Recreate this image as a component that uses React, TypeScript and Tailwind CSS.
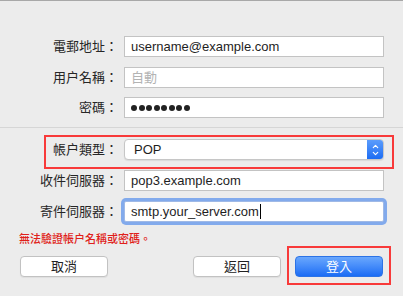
import { ChevronDown, ChevronUp } from "lucide-react";

const font = { fontFamily: '"Liberation Sans", "Noto Sans CJK TC", sans-serif' };

function Row({ label, children, className = "" }: { label: string; children: React.ReactNode; className?: string }) {
  return (
    <div className={`flex items-center h-[21px] ${className}`}>
      <div className="w-[118px] text-right text-[13px] text-[#262626] leading-none">{label}</div>
      <div className="ml-[6px] w-[260px] h-[21px]">{children}</div>
    </div>
  );
}

function TextField({ value, placeholder }: { value?: string; placeholder?: string }) {
  return (
    <div className="h-full bg-white border border-[#c3c3c3] flex items-center px-[6px] text-[13px] leading-none">
      {value ? <span className="text-[#1e1e1e]">{value}</span> : <span className="text-[#b3b3b3]">{placeholder}</span>}
    </div>
  );
}

export default function App() {
  return (
    <div style={font} className="relative w-[403px] h-[296px] bg-[#ececec] border-t border-[#a8a8a8] overflow-hidden">
      <div className="flex flex-col">
        <Row label="電郵地址：" className="mt-[35px]">
          <TextField value="username@example.com" />
        </Row>
        <Row label="用户名稱：" className="mt-[10px]">
          <TextField placeholder="自動" />
        </Row>
        <Row label="密碼：" className="mt-[9px]">
          <div className="h-full bg-white border border-[#c3c3c3] flex items-center gap-[1.5px] px-[6px]">
            {Array.from({ length: 8 }).map((_, i) => (
              <span key={i} className="w-[6px] h-[6px] rounded-full bg-[#222]" />
            ))}
          </div>
        </Row>

        <div className="mt-[9px] h-px bg-[#d6d6d6]" />

        <Row label="帳户類型：" className="mt-[11px]">
          <div className="h-full flex bg-white border border-[#c6c6c6] rounded-[4px] overflow-hidden shadow-[0_1px_1px_rgba(0,0,0,0.08)]">
            <div className="flex-1 flex items-center pl-[9px] text-[13px] text-[#1e1e1e] leading-none">POP</div>
            <div className="w-[16px] h-full bg-gradient-to-b from-[#5b9cfc] to-[#1a6cf3] flex flex-col items-center justify-center text-white">
              <ChevronUp size={9} strokeWidth={3} className="-mb-[1px]" />
              <ChevronDown size={9} strokeWidth={3} className="-mt-[1px]" />
            </div>
          </div>
        </Row>
        <Row label="收件伺服器：" className="mt-[10px]">
          <TextField value="pop3.example.com" />
        </Row>
        <Row label="寄件伺服器：" className="mt-[10px]">
          <div className="h-full bg-white border border-[#9fb9e6] ring-[3px] ring-[#82aaec] rounded-[2px] flex items-center px-[6px] text-[13px] leading-none text-[#1e1e1e]">
            smtp.your_server.com
            <span className="ml-px w-px h-[15px] bg-black" />
          </div>
        </Row>

        <div className="mt-[10px] ml-[19px] text-[11px] leading-[14px] font-medium text-[#e01f1b]">無法驗證帳户名稱或密碼。</div>

        <div className="mt-[10px] flex h-[21px] px-[20px]">
          <button className="w-[88px] h-full bg-white border border-[#c2c2c2] rounded-[4px] text-[13px] text-[#222] leading-none shadow-[0_1px_1px_rgba(0,0,0,0.06)]">取消</button>
          <div className="flex-1" />
          <button className="w-[88px] h-full bg-white border border-[#c2c2c2] rounded-[4px] text-[13px] text-[#222] leading-none shadow-[0_1px_1px_rgba(0,0,0,0.06)]">返回</button>
          <button className="ml-[14px] w-[88px] h-full rounded-[4px] bg-gradient-to-b from-[#69a7fd] to-[#1a6cf5] border border-[#2c73e6] text-[13px] text-white leading-none">登入</button>
        </div>
      </div>

      {/* annotation boxes */}
      <div className="absolute left-[44px] top-[134px] w-[350px] h-[34px] border-[2.5px] border-[#f83a3a]" />
      <div className="absolute left-[287px] top-[245px] w-[104px] h-[39px] border-[2.5px] border-[#f83a3a]" />
    </div>
  );
}
